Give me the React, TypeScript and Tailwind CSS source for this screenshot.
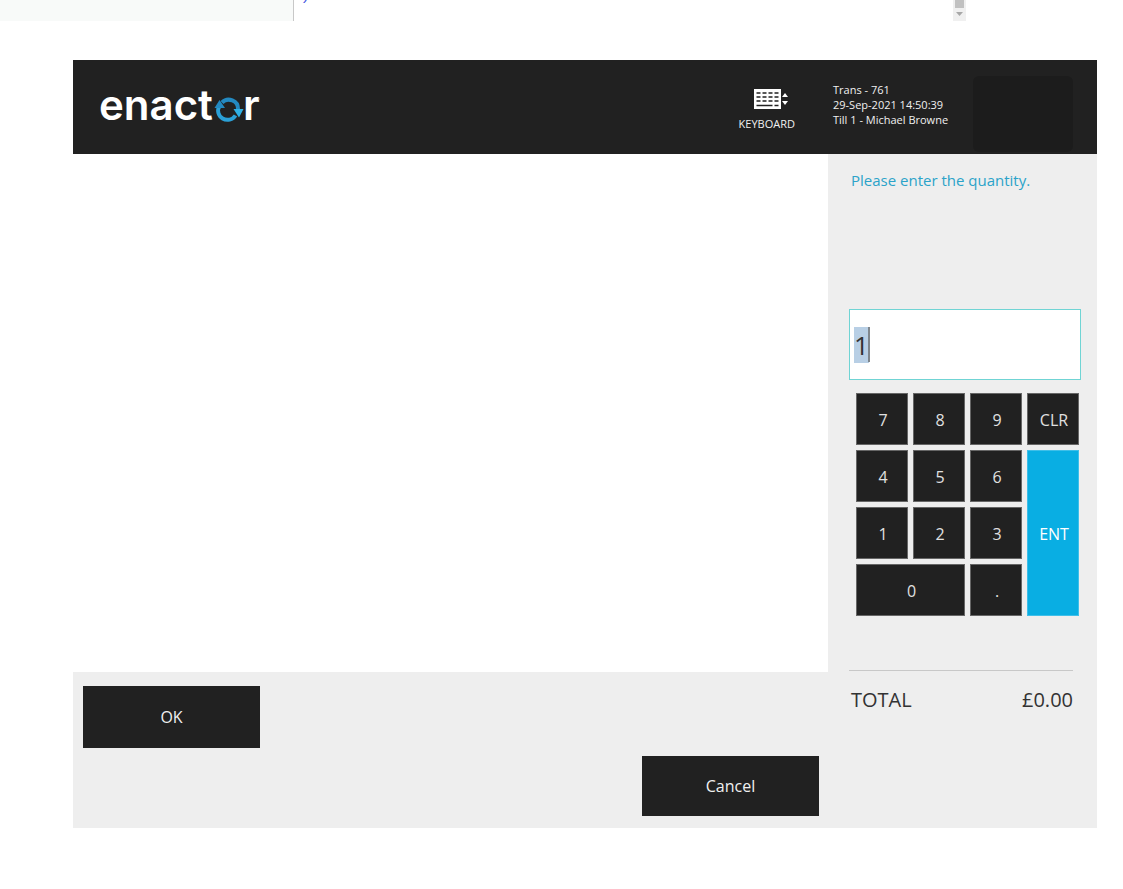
import { useState } from 'react';

interface Key {
  label: string;
  className?: string;
}

const keys: Key[] = [
  { label: '7' },
  { label: '8' },
  { label: '9' },
  { label: 'CLR' },
  { label: '4' },
  { label: '5' },
  { label: '6' },
  { label: 'ENT', className: 'row-span-3' },
  { label: '1' },
  { label: '2' },
  { label: '3' },
  { label: '0', className: 'col-span-2' },
  { label: '.' },
];

function Logo() {
  return (
    <svg width="170" height="60" viewBox="0 0 170 60" role="img" aria-label="enactor">
      <g fill="#fff" fontFamily="Inter, sans-serif" fontWeight="600" fontSize="42">
        <text x="2" y="44">enact</text>
        <text x="146" y="44">r</text>
      </g>
      <g fill="none" strokeWidth="4">
        <path d="M125 26.500A9.300 9 0 0 1 141 33" stroke="#2389c0" />
        <path d="M122.500 30A9.300 9 0 0 0 138.500 39.500" stroke="#2ba0d6" />
      </g>
      <path d="M117.500 32L122.500 24L128 32Z" fill="#2389c0" />
      <path d="M136.500 33H146.500L142 41.500Z" fill="#2fb0e4" />
      <circle cx="162" cy="23" r="0.700" fill="#888" />
    </svg>
  );
}

function KeyboardIcon() {
  return (
    <svg className="ml-2.5" width="36" height="20" viewBox="0 0 36 20" aria-hidden="true">
      <path d="M0 0H27V20H0Z" fill="#fff" />
      <g stroke="#212121" strokeWidth="1.500">
        <path d="M2.500 4H24.500M2.500 8H24.500M2.500 12H24.500" strokeDasharray="4 2" />
        <path d="M2.500 16.500H18.500M20.500 16.500H24.500" />
      </g>
      <path d="M28 8L31 4L34 8ZM28 12H34L31 16Z" fill="#fff" />
    </svg>
  );
}

function EditorStrip() {
  return (
    <div className="flex h-[21px] pr-[157px]">
      <div className="w-[294px] border-r border-[#c8c8c8] bg-[#f8faf9]" />
      <div className="flex h-1 flex-1 items-end overflow-hidden pl-2 font-['Liberation_Mono',monospace] text-sm italic leading-4 text-[#3a4fe0]">
        )
      </div>
      <div className="flex w-[13px] flex-col items-center bg-[#f0f0f0]">
        <div className="h-2 w-[9px] bg-[#c1c1c1]" />
        <svg className="mt-1" width="7" height="4" viewBox="0 0 7 4" aria-hidden="true">
          <path d="M0 0H7L3.500 4Z" fill="#a8a8a8" />
        </svg>
      </div>
    </div>
  );
}

function Header() {
  return (
    <header className="flex h-[94px] items-start bg-[#212121] px-6 pt-4 text-[#f0f0f0]">
      <div className="flex-1">
        <Logo />
      </div>
      <button className="mr-[38px] flex flex-col items-center pt-[13px] text-[11px]">
        <KeyboardIcon />
        <span className="mt-[7px] leading-4">KEYBOARD</span>
      </button>
      <div className="w-[140px] pt-[6px] text-[11px] leading-[15px]">
        <p>Trans - 761</p>
        <p>29-Sep-2021 14:50:39</p>
        <p>Till 1 - Michael Browne</p>
      </div>
      <div className="h-[76px] w-[100px] rounded-md bg-[#1c1c1c]" />
    </header>
  );
}

function Keypad({ onPress }: { onPress: (label: string) => void }) {
  return (
    <div className="mt-[13px] grid grid-cols-4 gap-[5px] pl-[7px] pr-[2px]">
      {keys.map((key) => (
        <button
          key={key.label}
          onClick={() => onPress(key.label)}
          className={`min-h-[52px] border pl-[2px] pt-[2px] text-base ${
            key.label === 'ENT'
              ? 'border-[#3fbfe9] bg-[#09aee3] text-white'
              : 'border-[#666] bg-[#212121] text-[#e0e0e0]'
          } ${key.className ?? ''}`}
        >
          {key.label}
        </button>
      ))}
    </div>
  );
}

export default function App() {
  const [quantity, setQuantity] = useState('1');

  const handlePress = (label: string) => {
    if (label === 'ENT') return;
    setQuantity(label === 'CLR' ? '' : quantity + label);
  };

  return (
    <div className="bg-white font-['Open_Sans',sans-serif]">
      <EditorStrip />
      <main className="mb-[61px] ml-[73px] mr-[26px] mt-[39px]">
        <Header />
        <div className="flex bg-[#eee]">
          <section className="flex flex-1 flex-col">
            <div className="min-h-[518px] flex-1 bg-white" />
            <div className="flex flex-col gap-2 pb-3 pl-[10px] pr-[9px] pt-[14px] text-base text-[#f0f0f0]">
              <button className="h-[62px] w-[177px] self-start bg-[#212121]">OK</button>
              <button className="h-[60px] w-[177px] self-end bg-[#212121]">Cancel</button>
            </div>
          </section>
          <aside className="w-[269px] pl-[21px] pr-4">
            <label
              htmlFor="quantity"
              className="mt-[14px] block h-[141px] pl-[2px] text-[15px] leading-6 text-[#2ba3c9]"
            >
              Please enter the quantity.
            </label>
            <div className="relative">
              <input
                id="quantity"
                autoFocus
                autoComplete="off"
                value={quantity}
                onChange={(e) => setQuantity(e.target.value)}
                onFocus={(e) => e.target.select()}
                className="block h-[71px] w-full border border-[#70d4d4] bg-white px-1 text-[26px] text-[#333] outline-none selection:bg-[#b8cfe5] selection:text-[#333]"
              />
              <span className="absolute left-[19px] top-[18px] h-[35px] w-[2px] bg-[#7f868c]" />
            </div>
            <Keypad onPress={handlePress} />
            <div className="mr-2 mt-[54px] flex justify-between border-t border-[#c8c8c8] pl-[2px] pt-[15px] text-xl text-[#333]">
              <span>TOTAL</span>
              <span>£0.00</span>
            </div>
          </aside>
        </div>
      </main>
    </div>
  );
}
